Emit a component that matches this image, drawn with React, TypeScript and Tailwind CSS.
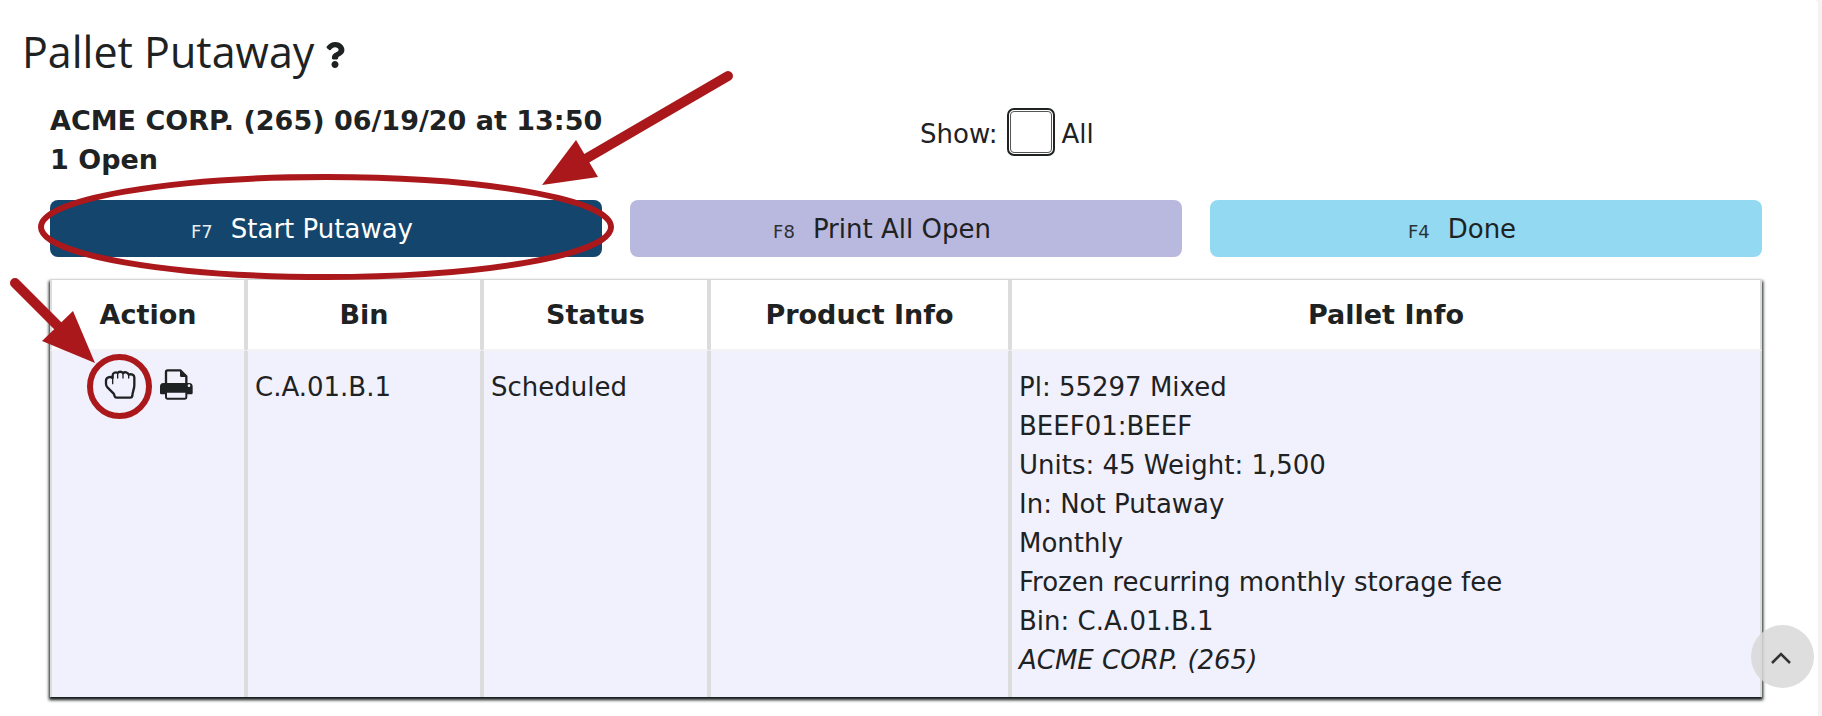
import { useState } from 'react';
import { FaQuestion } from 'react-icons/fa';

const columns = ['Action', 'Bin', 'Status', 'Product Info', 'Pallet Info'];

const pallets = [
  {
    bin: 'C.A.01.B.1',
    status: 'Scheduled',
    product: '',
    info: [
      'Pl: 55297 Mixed',
      'BEEF01:BEEF',
      'Units: 45 Weight: 1,500',
      'In: Not Putaway',
      'Monthly',
      'Frozen recurring monthly storage fee',
      'Bin: C.A.01.B.1',
    ],
    customer: 'ACME CORP. (265)',
  },
];

function FistIcon() {
  return (
    <svg width="32" height="29" viewBox="0 0 96 87" fill="none" stroke="currentColor" strokeLinecap="round" strokeLinejoin="round" aria-hidden="true">
      <path
        strokeWidth="7"
        d="M26 24C18 18 6 22 6 32V42C6 47 8 50 11 53L29 71C31 74 31 76 32 79Q33 83 38 83H79Q84 83 85 78C85 66 91 58 91 46V22C91 14 82 11 74 14C71 6 62 5 57 9C53 4 44 4 41 9C34 5 26 9 26 16Z"
      />
      <path strokeWidth="4" d="M26 24V41M41 10V24M57 10V24M74 14V24" />
    </svg>
  );
}

function PrinterIcon() {
  return (
    <svg width="33" height="31" viewBox="0 0 99 93" fill="none" stroke="currentColor" strokeLinejoin="round" aria-hidden="true">
      <path strokeWidth="7" d="M18 46V9Q18 4 23 4H61L79 22V46" />
      <path fill="currentColor" stroke="none" d="M60 4L80 24H64Q60 24 60 20ZM10 42H88Q98 42 98 53V72Q98 76 94 76H4Q0 76 0 72V53Q0 42 10 42Z" />
      <path strokeWidth="6" className="fill-[#f1f1fd]" d="M18 68H79V85Q79 89 75 89H22Q18 89 18 85Z" />
      <circle cx="87" cy="50" r="4" stroke="none" className="fill-[#f1f1fd]" />
    </svg>
  );
}

function KeyButton({ hotkey, label, className }: { hotkey: string; label: string; className: string }) {
  return (
    <button type="button" className={`flex h-[57px] flex-1 items-center justify-center rounded-lg pt-1 pr-12 ${className}`}>
      <span className="flex items-baseline gap-[18px]">
        <span className="text-[18px] opacity-90">{hotkey}</span>
        <span>{label}</span>
      </span>
    </button>
  );
}

// hand drawn callouts that lie over the page
function Callouts() {
  return (
    <svg className="pointer-events-none absolute left-0 top-0" width="740" height="440" viewBox="0 0 740 440" fill="none" aria-hidden="true">
      <g stroke="#aa181c">
        <ellipse cx="326" cy="227" rx="285" ry="50" strokeWidth="6" />
        <circle cx="119.5" cy="386.5" r="29.5" strokeWidth="6" />
        <path d="M728 76L582 161" strokeWidth="10" strokeLinecap="round" />
        <path d="M15 283L64 332" strokeWidth="10" strokeLinecap="round" />
      </g>
      <path d="M542 185L576 140L598 177Z" fill="#aa181c" />
      <path d="M95 363L42 341L73 311Z" fill="#aa181c" />
    </svg>
  );
}

export default function App() {
  const [showAll, setShowAll] = useState(false);

  return (
    <div className="min-h-screen bg-[#f4f2f3] pr-1 font-['Verdana','DejaVu_Sans',sans-serif] text-[26px] leading-[39px] text-[#1e2223]">
      <main className="relative min-h-screen rounded-tr bg-white pt-6 pb-4">
        <h1 className="flex items-center gap-2 pl-[22px] font-['Open_Sans',sans-serif] text-[43px] leading-[56px]">
          Pallet Putaway
          <a href="#help" aria-label="Help">
            <FaQuestion className="mt-1.5 size-[26px]" />
          </a>
        </h1>

        <div className="mt-[21px] pl-[50px] pr-[56px]">
          <div className="grid grid-cols-2">
            <div className="text-[27px] font-bold">
              <p>ACME CORP. (265) 06/19/20 at 13:50</p>
              <p>1 Open</p>
            </div>
            <div className="flex items-center gap-3 pb-4 pl-[14px]">
              <span className="pt-1">Show:</span>
              <label className="flex items-center gap-2.5">
                <input
                  type="checkbox"
                  checked={showAll}
                  onChange={(e) => setShowAll(e.target.checked)}
                  className="size-[42px] appearance-none rounded-sm border border-[#555] bg-white outline-2 outline-offset-1 outline-[#1e2223] checked:bg-[#14456c]"
                />
                <span className="pt-1">All</span>
              </label>
            </div>
          </div>

          <div className="mt-[21px] flex gap-7">
            <KeyButton hotkey="F7" label="Start Putaway" className="bg-[#14456c] text-white" />
            <KeyButton hotkey="F8" label="Print All Open" className="bg-[#b9b8de]" />
            <KeyButton hotkey="F4" label="Done" className="bg-[#94d9f2]" />
          </div>

          <table className="mt-[23px] w-full table-fixed border-separate border-spacing-0 shadow-[0_2px_3px_1px_#0f1414]">
            <colgroup>
              <col className="w-[196px]" />
              <col className="w-[236px]" />
              <col className="w-[227px]" />
              <col className="w-[301px]" />
              <col />
            </colgroup>
            <thead>
              <tr className="bg-white text-[27px]">
                {columns.map((name) => (
                  <th key={name} className="border-x-2 border-b-2 border-x-[#dcdcdd] border-b-[#f4f2f3] px-2 py-[15px]">
                    {name}
                  </th>
                ))}
              </tr>
            </thead>
            <tbody>
              {pallets.map((row) => (
                <tr key={row.bin} className="bg-[#f1f1fd] align-top">
                  <td className="border-x-2 border-[#dcdcdd] px-2 py-[17px]">
                    <div className="flex h-8 items-center justify-center gap-6">
                      <button type="button" aria-label="Start putaway">
                        <FistIcon />
                      </button>
                      <button type="button" aria-label="Print">
                        <PrinterIcon />
                      </button>
                    </div>
                  </td>
                  <td className="border-x-2 border-[#dcdcdd] px-[7px] py-[17px]">{row.bin}</td>
                  <td className="border-x-2 border-[#dcdcdd] px-[7px] py-[17px]">{row.status}</td>
                  <td className="border-x-2 border-[#dcdcdd] px-[7px] py-[17px]">{row.product}</td>
                  <td className="border-x-2 border-[#dcdcdd] px-[7px] py-[17px]">
                    {row.info.map((line) => (
                      <div key={line}>{line}</div>
                    ))}
                    <em>{row.customer}</em>
                  </td>
                </tr>
              ))}
            </tbody>
          </table>
        </div>
        <Callouts />
      </main>

      <button
        type="button"
        aria-label="Back to top"
        onClick={() => window.scrollTo({ top: 0 })}
        className="fixed right-2 bottom-7 flex size-[63px] items-center justify-center rounded-full bg-[#d8d8d8]/85"
      >
        <svg width="24" height="16" viewBox="0 0 24 16" fill="none" stroke="#333" strokeWidth="2.5" aria-hidden="true">
          <path d="M1 14L10 5L19 14" />
        </svg>
      </button>
    </div>
  );
}
